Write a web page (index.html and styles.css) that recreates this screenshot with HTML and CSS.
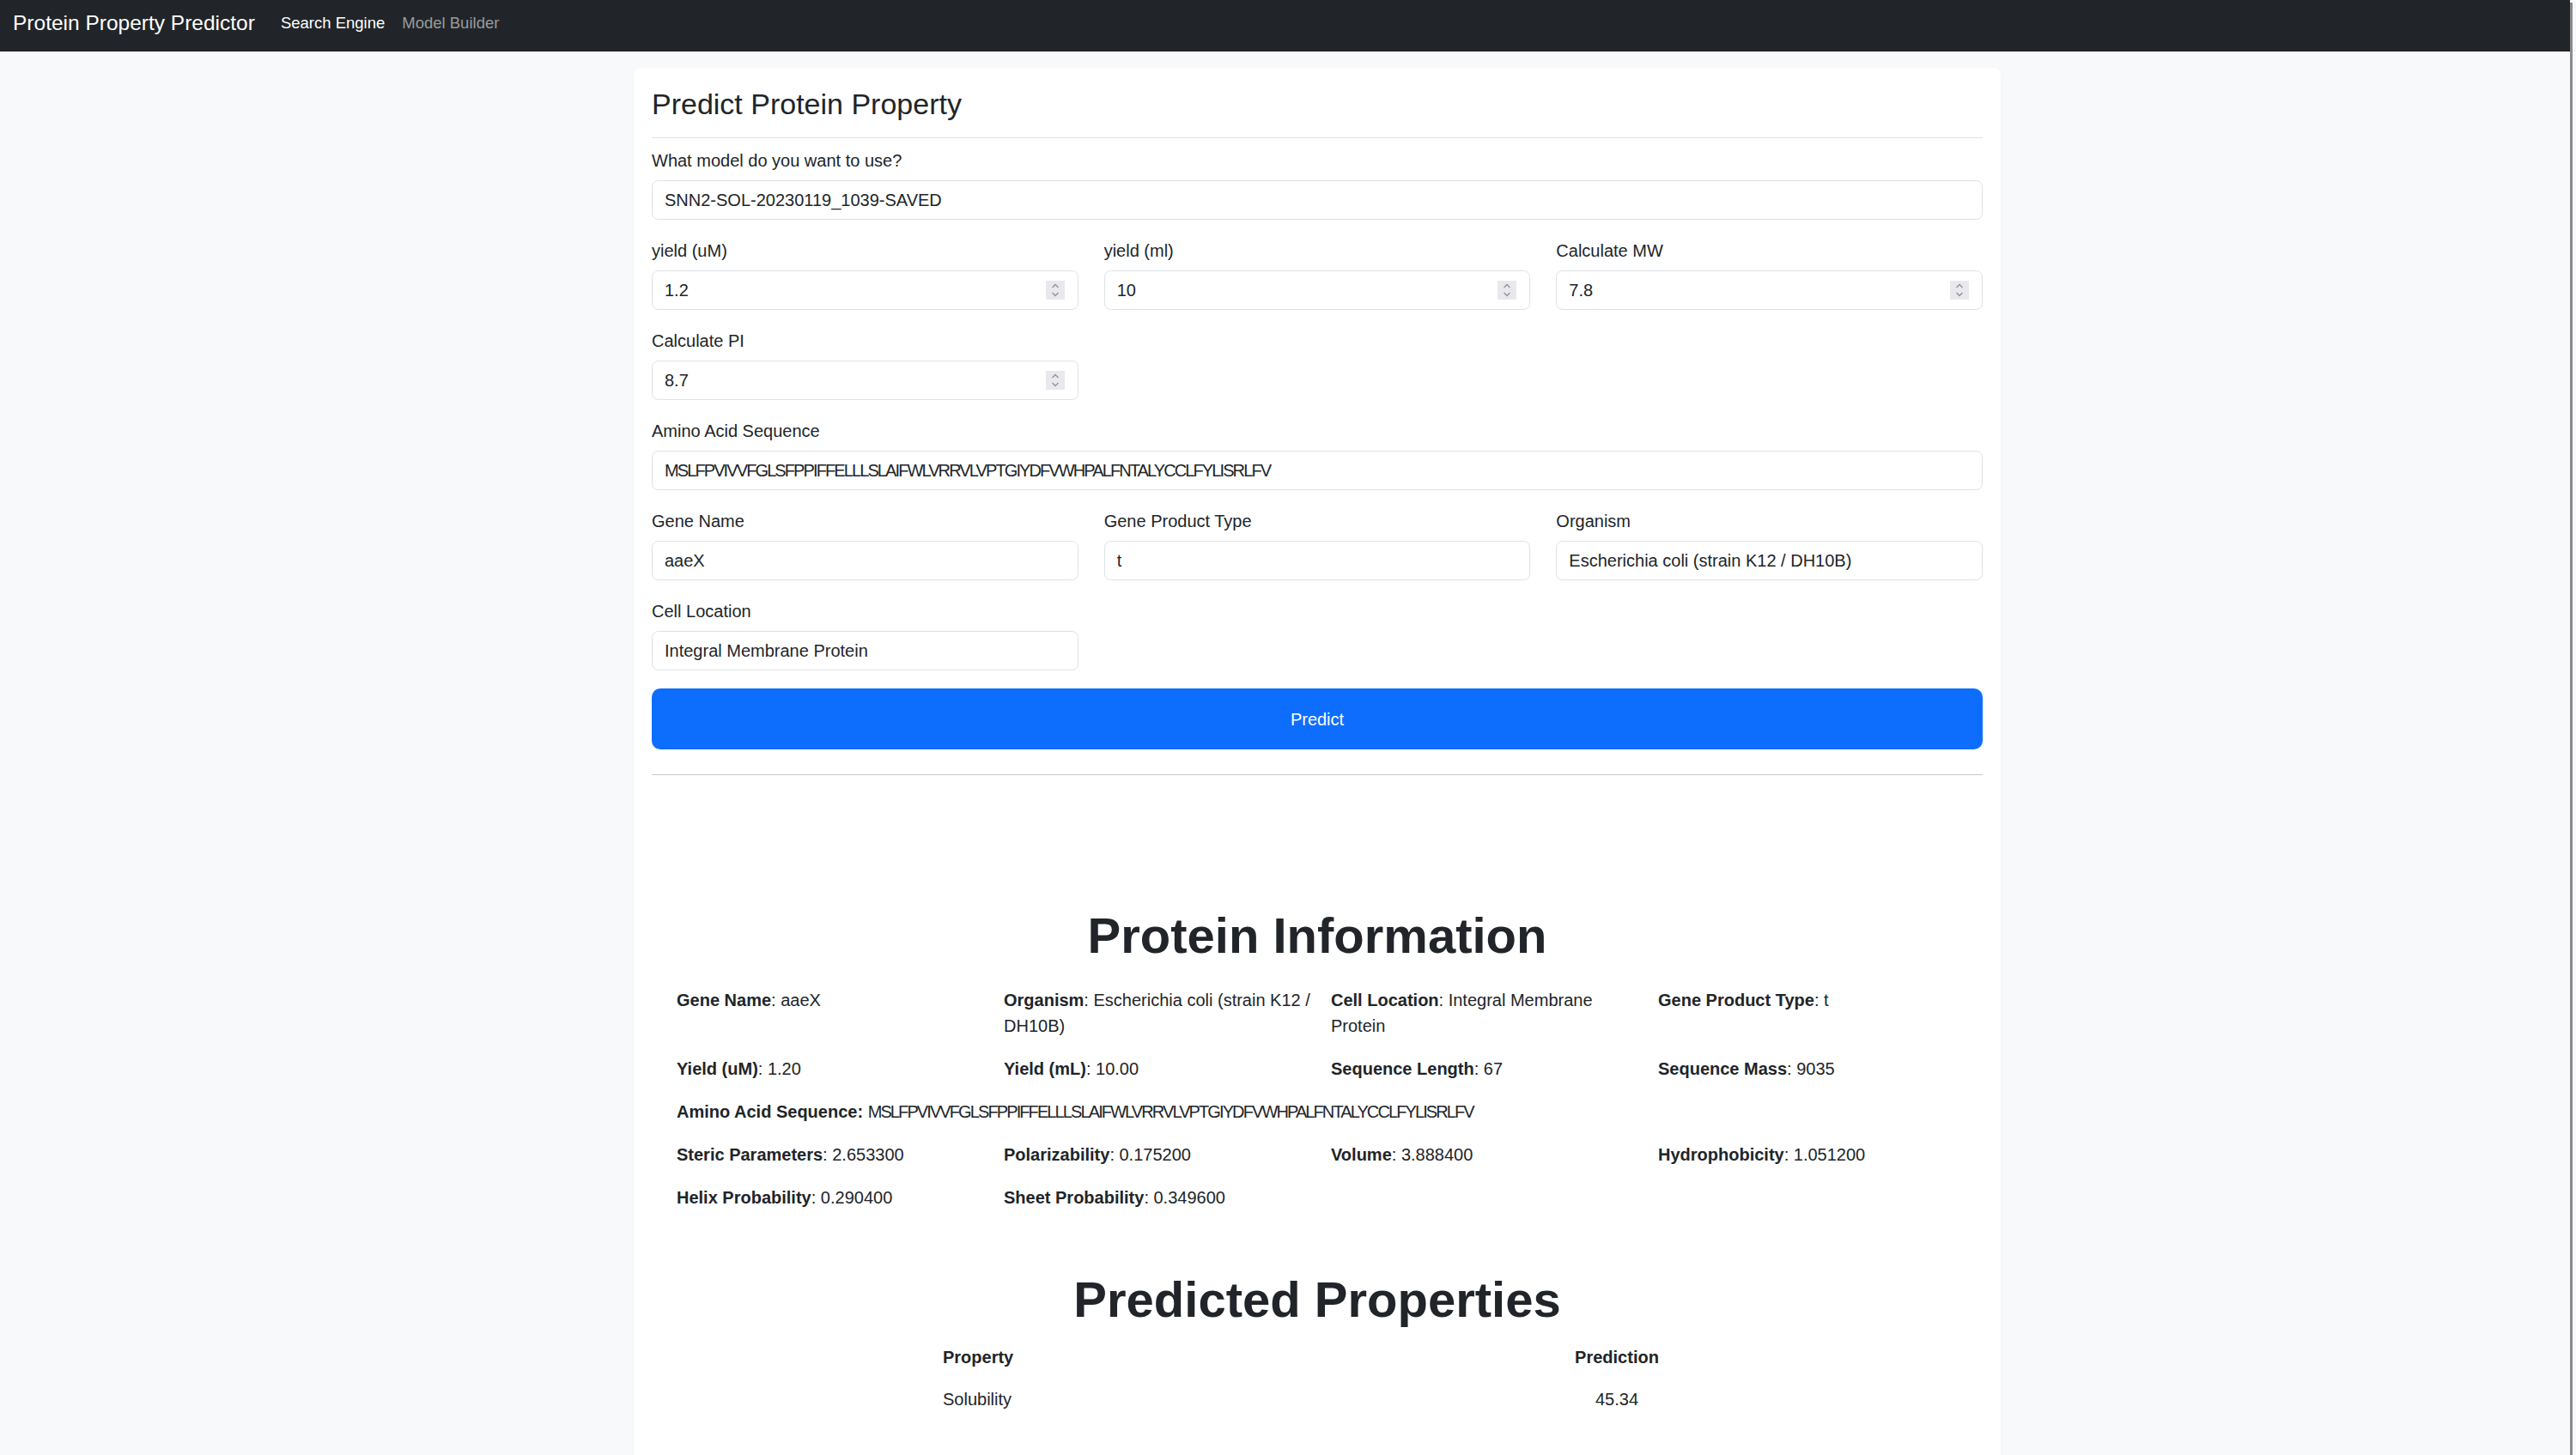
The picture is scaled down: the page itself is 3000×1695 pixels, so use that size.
FILE: index.html
```html
<!DOCTYPE html>
<html lang="en">
<head>
<meta charset="utf-8">
<title>Protein Property Predictor</title>
<link rel="stylesheet" href="styles.css">
</head>
<body>
<nav class="navbar">
  <a class="brand" href="#">Protein Property Predictor</a>
  <ul class="nav">
    <li><a class="nav-link active" href="#">Search Engine</a></li>
    <li><a class="nav-link" href="#">Model Builder</a></li>
  </ul>
</nav>

<main class="page">
  <section class="card">
    <h3 class="card-title">Predict Protein Property</h3>
    <hr class="title-rule">

    <form class="form">
      <div class="group">
        <label>What model do you want to use?</label>
        <input class="control" type="text" value="SNN2-SOL-20230119_1039-SAVED">
      </div>

      <div class="row3">
        <div class="group">
          <label>yield (uM)</label>
          <div class="num">
            <input class="control" type="text" value="1.2">
            <span class="spin"><svg viewBox="0 0 22 22" width="22" height="22"><path d="M7.5 8 L11 4.5 L14.5 8" /><path d="M7.5 14 L11 17.5 L14.5 14" /></svg></span>
          </div>
        </div>
        <div class="group">
          <label>yield (ml)</label>
          <div class="num">
            <input class="control" type="text" value="10">
            <span class="spin"><svg viewBox="0 0 22 22" width="22" height="22"><path d="M7.5 8 L11 4.5 L14.5 8" /><path d="M7.5 14 L11 17.5 L14.5 14" /></svg></span>
          </div>
        </div>
        <div class="group">
          <label>Calculate MW</label>
          <div class="num">
            <input class="control" type="text" value="7.8">
            <span class="spin"><svg viewBox="0 0 22 22" width="22" height="22"><path d="M7.5 8 L11 4.5 L14.5 8" /><path d="M7.5 14 L11 17.5 L14.5 14" /></svg></span>
          </div>
        </div>
      </div>

      <div class="row3">
        <div class="group">
          <label>Calculate PI</label>
          <div class="num">
            <input class="control" type="text" value="8.7">
            <span class="spin"><svg viewBox="0 0 22 22" width="22" height="22"><path d="M7.5 8 L11 4.5 L14.5 8" /><path d="M7.5 14 L11 17.5 L14.5 14" /></svg></span>
          </div>
        </div>
      </div>

      <div class="group">
        <label>Amino Acid Sequence</label>
        <input class="control seq" type="text" value="MSLFPVIVVFGLSFPPIFFELLLSLAIFWLVRRVLVPTGIYDFVWHPALFNTALYCCLFYLISRLFV">
      </div>

      <div class="row3">
        <div class="group">
          <label>Gene Name</label>
          <input class="control" type="text" value="aaeX">
        </div>
        <div class="group">
          <label>Gene Product Type</label>
          <input class="control" type="text" value="t">
        </div>
        <div class="group">
          <label>Organism</label>
          <input class="control" type="text" value="Escherichia coli (strain K12 / DH10B)">
        </div>
      </div>

      <div class="row3">
        <div class="group">
          <label>Cell Location</label>
          <input class="control" type="text" value="Integral Membrane Protein">
        </div>
      </div>

      <button class="btn" type="button">Predict</button>
    </form>

    <hr class="section-rule">

    <h1 class="section-title">Protein Information</h1>
    <div class="info">
      <div class="info-item"><strong>Gene Name</strong>: aaeX</div>
      <div class="info-item"><strong>Organism</strong>: Escherichia coli (strain K12 / DH10B)</div>
      <div class="info-item"><strong>Cell Location</strong>: Integral Membrane Protein</div>
      <div class="info-item"><strong>Gene Product Type</strong>: t</div>

      <div class="info-item"><strong>Yield (uM)</strong>: 1.20</div>
      <div class="info-item"><strong>Yield (mL)</strong>: 10.00</div>
      <div class="info-item"><strong>Sequence Length</strong>: 67</div>
      <div class="info-item"><strong>Sequence Mass</strong>: 9035</div>

      <div class="info-item wide"><strong>Amino Acid Sequence:</strong> <span class="seq">MSLFPVIVVFGLSFPPIFFELLLSLAIFWLVRRVLVPTGIYDFVWHPALFNTALYCCLFYLISRLFV</span></div>

      <div class="info-item"><strong>Steric Parameters</strong>: 2.653300</div>
      <div class="info-item"><strong>Polarizability</strong>: 0.175200</div>
      <div class="info-item"><strong>Volume</strong>: 3.888400</div>
      <div class="info-item"><strong>Hydrophobicity</strong>: 1.051200</div>

      <div class="info-item"><strong>Helix Probability</strong>: 0.290400</div>
      <div class="info-item"><strong>Sheet Probability</strong>: 0.349600</div>
    </div>

    <h1 class="section-title second">Predicted Properties</h1>
    <table class="pred">
      <thead>
        <tr><th class="c-prop">Property</th><th class="c-val">Prediction</th></tr>
      </thead>
      <tbody>
        <tr><td class="c-prop">Solubility</td><td class="c-val">45.34</td></tr>
      </tbody>
    </table>
  </section>
</main>

<div class="scrollbar"><div class="thumb"></div></div>
</body>
</html>
```

FILE: styles.css
```css
* { box-sizing: border-box; }

html, body {
  margin: 0;
  padding: 0;
}

body {
  background: #f8f9fa;
  color: #212529;
  font-family: "Liberation Sans", Arial, sans-serif;
  font-size: 20px;
  line-height: 30px;
}

/* ---------- navbar ---------- */
.navbar {
  height: 60px;
  background: #212529;
  display: flex;
  align-items: flex-start;
  padding: 12px 15px 0;
}

.brand {
  color: #fff;
  text-decoration: none;
  font-size: 24.5px;
  line-height: 30px;
  margin-right: 20px;
}

.nav {
  list-style: none;
  margin: 0;
  padding: 0;
  display: flex;
}

.nav-link {
  display: block;
  padding: 0 10px;
  font-size: 18.5px;
  line-height: 30px;
  color: rgba(255, 255, 255, 0.55);
  text-decoration: none;
}

.nav-link.active { color: #fff; }

/* ---------- page / card ---------- */
.page {
  width: 1660px;
  margin: 19px auto 0;
  display: flex;
  justify-content: flex-end;
}

.card {
  width: 1592px;
  background: #fff;
  border-radius: 8px;
  box-shadow: 0 1px 3px rgba(0, 0, 0, 0.04);
  padding: 22px 21px 120px;
}

.card-title {
  margin: 0 0 19px;
  font-size: 34px;
  line-height: 40px;
  font-weight: 400;
}

.title-rule {
  margin: 0 0 11px;
  border: 0;
  border-top: 1px solid #dee2e6;
}

/* ---------- form ---------- */
.group { margin-bottom: 21px; }

.group label {
  display: block;
  line-height: 30px;
  margin-bottom: 8px;
}

.row3 {
  display: grid;
  grid-template-columns: repeat(3, 1fr);
  column-gap: 30px;
}

.control {
  display: block;
  width: 100%;
  height: 46px;
  padding: 7px 14px;
  font: inherit;
  font-size: 20px;
  line-height: 30px;
  color: #212529;
  background: #fff;
  border: 1px solid #dee2e6;
  border-radius: 7.5px;
  outline: none;
}

.control.seq { letter-spacing: -1.9px; }

.num { position: relative; }

.spin {
  position: absolute;
  right: 16px;
  top: 12px;
  width: 22px;
  height: 22px;
  background: #e9e9ed;
  display: block;
}

.spin svg {
  display: block;
  fill: none;
  stroke: #8f8f9d;
  stroke-width: 1.3;
}

.btn {
  display: block;
  width: 100%;
  height: 71px;
  border: 0;
  border-radius: 10px;
  background: #0d6efd;
  color: #fff;
  font: inherit;
  font-size: 20px;
  line-height: 30px;
  cursor: pointer;
}

.section-rule {
  margin: 29px 0 0;
  border: 0;
  border-top: 1px solid #c8c9ca;
}

/* ---------- info ---------- */
.section-title {
  margin: 152px 0 25px;
  text-align: center;
  font-size: 58px;
  line-height: 70px;
  font-weight: 700;
}

.section-title.second {
  margin: 69px 0 7px;
}

.info {
  margin-left: 29px;
  display: grid;
  grid-template-columns: repeat(4, 367px);
  column-gap: 14px;
  row-gap: 20px;
}

.info-item { line-height: 30px; }

.info-item.wide { grid-column: 1 / -1; }

.info-item .seq { letter-spacing: -1.9px; }

/* ---------- prediction table ---------- */
.pred {
  width: 892px;
  margin: 0 auto;
  border-collapse: collapse;
}

.pred th,
.pred td {
  padding: 9.5px 10px;
  line-height: 30px;
}

.pred th { font-weight: 700; }

.pred .c-prop { text-align: left; }

.pred .c-val {
  width: 194px;
  text-align: center;
}

/* ---------- overlay scrollbar ---------- */
.scrollbar {
  position: fixed;
  top: 0;
  right: 0;
  bottom: 0;
  width: 7px;
  background: #f8f9fa;
}

.scrollbar .thumb {
  margin-top: 3px;
  width: 3px;
  height: calc(100% - 3px);
  background: #8b8b8b;
}
```
